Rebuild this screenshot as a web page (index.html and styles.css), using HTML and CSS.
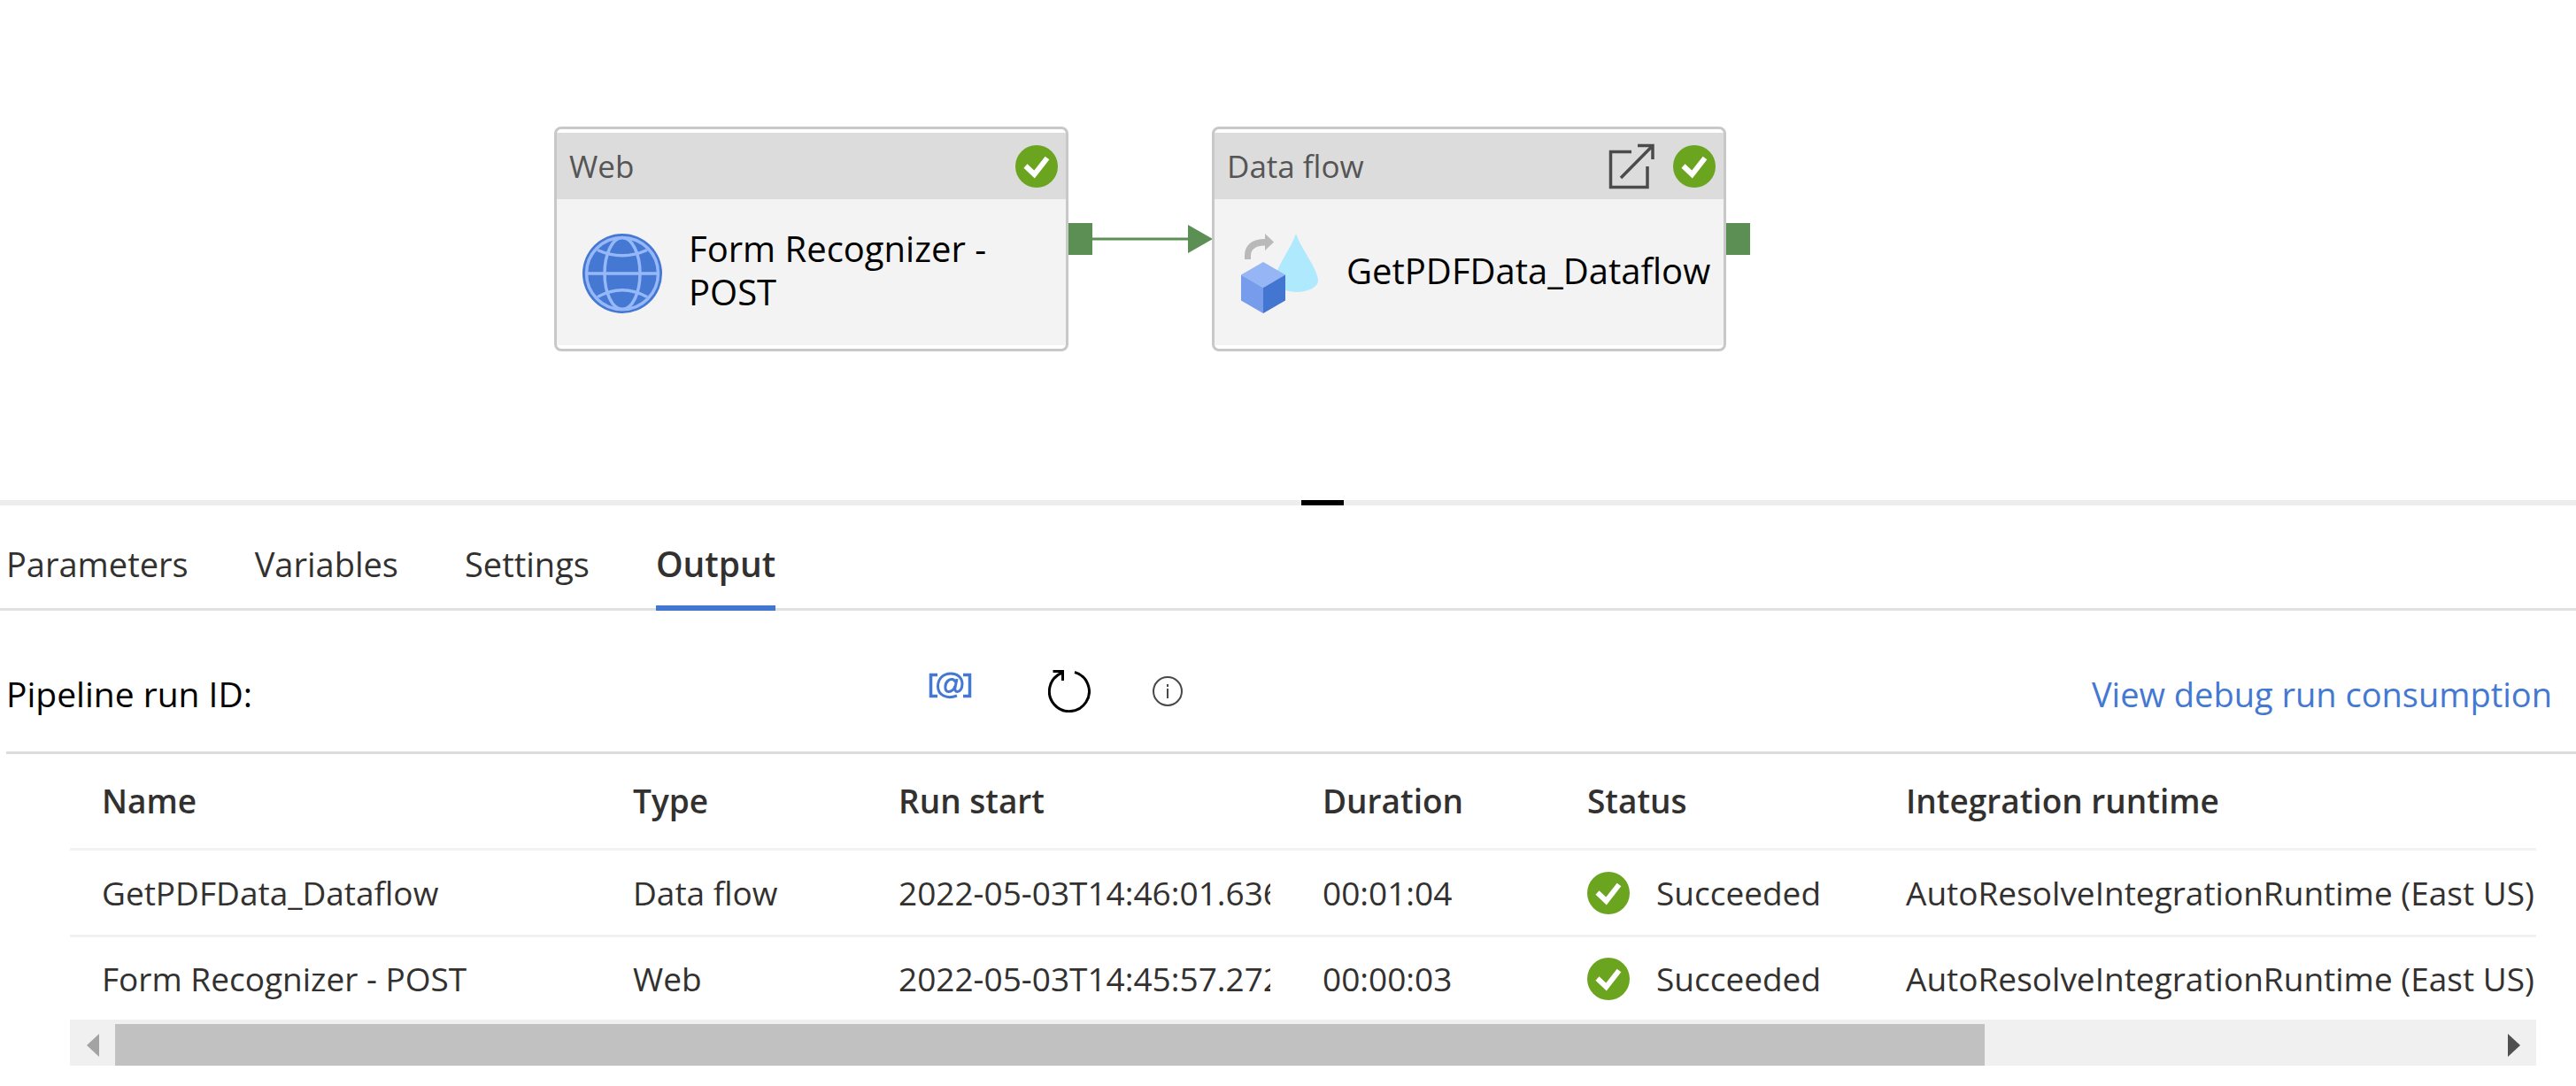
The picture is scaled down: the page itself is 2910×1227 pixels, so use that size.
FILE: index.html
```html
<!DOCTYPE html>
<html lang="en">
<head>
<meta charset="utf-8">
<title>Pipeline debug run</title>
<link rel="stylesheet" href="styles.css">
</head>
<body>
<svg class="symbols" aria-hidden="true">
  <symbol id="check" viewBox="0 0 48 48">
    <circle cx="24" cy="24" r="24" fill="#6ba41f"/>
    <path d="M11.500 23.500L21.500 33L36 14.500" fill="none" stroke="#fff" stroke-width="6"/>
  </symbol>
</svg>

<main class="canvas" aria-label="Pipeline canvas">
  <svg class="connector" viewBox="0 0 163 36" aria-hidden="true">
    <path d="M0 0h27v36H0z" fill="#5c8f53"/>
    <path d="M27 18h110" stroke="#5c8f53" stroke-width="3"/>
    <path d="M135 2l28 16l-28 16z" fill="#5c8f53"/>
  </svg>
  <article class="node node-web">
    <header class="node-head">
      <span class="node-type">Web</span>
      <svg class="check" role="img" aria-label="Succeeded"><use href="#check"/></svg>
    </header>
    <div class="node-body">
      <svg class="node-icon" viewBox="0 0 90 90" aria-hidden="true">
        <circle cx="45" cy="45" r="45" fill="#4478d2"/>
        <g fill="none" stroke="#97b8f8" stroke-width="3.500">
          <circle cx="45" cy="45" r="40.500"/>
          <ellipse cx="45" cy="45" rx="20" ry="40.500"/>
          <path d="M5 45h80M17 18.500Q45 31 73 18.500M17 71.500Q45 56 73 71.500"/>
        </g>
      </svg>
      <h2 class="node-name">Form Recognizer - POST</h2>
    </div>
  </article>
  <article class="node node-flow">
    <header class="node-head">
      <span class="node-type">Data flow</span>
      <button class="icon-button popout" type="button" aria-label="Open data flow">
        <svg width="52" height="52" viewBox="0 0 52 52" fill="none" stroke="#4b4b4b" stroke-width="3.500">
          <path d="M26 9.500H2.500V49.500H44V26M33 2.500H50V18M50 2.500L14 39"/>
        </svg>
      </button>
      <svg class="check" role="img" aria-label="Succeeded"><use href="#check"/></svg>
    </header>
    <div class="node-body">
      <svg class="node-icon" viewBox="0 0 90 90" aria-hidden="true">
        <path d="M63 0C68 16 88 40 88 53A25 13 0 0 1 63 66A25 13 0 0 1 39 53C39 40 58 16 63 0z" fill="#aee9fd"/>
        <path d="M5 29V25C5 13 13 6 28 6V0L38 9.500L28 19V13.500C17 13.500 12 18 12 25V29z" fill="#b9b9b9"/>
        <path d="M26 32L51 46.500L26 61L1 46.500z" fill="#95b5f5"/>
        <path d="M1 46.500L26 61V90L1 75.500z" fill="#779cec"/>
        <path d="M51 46.500L26 61V90L51 75.500z" fill="#4276d0"/>
      </svg>
      <h2 class="node-name">GetPDFData_Dataflow</h2>
    </div>
  </article>
  <span class="port"></span>
</main>

<div class="splitter" role="separator" aria-orientation="horizontal"><span class="grip"></span></div>

<section class="panel">
  <nav class="tabs">
    <button class="tab" type="button">Parameters</button>
    <button class="tab" type="button">Variables</button>
    <button class="tab" type="button">Settings</button>
    <button class="tab active" type="button" aria-current="page">Output</button>
  </nav>

  <div class="toolbar">
    <span class="run-id">Pipeline run ID:</span>
    <div class="tools">
      <button class="icon-button" type="button" aria-label="Dynamic content">
        <svg width="50" height="48" viewBox="0 0 50 48" fill="none" stroke="#4478d2" stroke-width="3">
          <path d="M10 5.500H2.500V29.500H10M39 5.500H46.500V29.500H39" stroke-width="3.500"/>
          <path d="M32 29C20 33.500 10.500 28 10.500 18.500C10.500 10 16.500 4 25 4C33 4 38 9 38 15.500C38 21 35.500 24.500 32.500 24.500C30 24.500 29.500 22.500 30 19.500L32 10"/>
          <path d="M30.500 14C29 10 25 9.500 22 12C18 15.500 17.500 24.500 22.500 24.500C26 24.500 29 21.500 30 18"/>
        </svg>
      </button>
      <button class="icon-button" type="button" aria-label="Refresh">
        <svg width="48" height="48" viewBox="0 0 48 48" fill="none" stroke="#000" stroke-width="3">
          <path d="M30 2.500A22.500 22.500 0 1 1 15 3.500M5.500 1.500H16.500V12"/>
        </svg>
      </button>
      <button class="icon-button info" type="button" aria-label="Information">
        <svg width="34" height="34" viewBox="0 0 34 34" fill="none" stroke="#484848" stroke-width="2">
          <circle cx="17" cy="17" r="16"/>
          <path d="M17 14v11M17 9v3"/>
        </svg>
      </button>
    </div>
    <a class="debug-link" href="#">View debug run consumption</a>
  </div>

  <div class="runs">
    <table class="grid">
      <colgroup>
        <col class="c-name"><col class="c-type"><col class="c-start"><col class="c-duration"><col class="c-status"><col>
      </colgroup>
      <thead>
        <tr><th>Name</th><th>Type</th><th>Run start</th><th>Duration</th><th>Status</th><th>Integration runtime</th></tr>
      </thead>
      <tbody>
        <tr>
          <td>GetPDFData_Dataflow</td><td>Data flow</td>
          <td><div class="clip">2022-05-03T14:46:01.636</div></td><td>00:01:04</td>
          <td><div class="status"><svg class="check" aria-hidden="true"><use href="#check"/></svg>Succeeded</div></td>
          <td>AutoResolveIntegrationRuntime (East US)</td>
        </tr>
        <tr>
          <td>Form Recognizer - POST</td><td>Web</td>
          <td><div class="clip">2022-05-03T14:45:57.272</div></td><td>00:00:03</td>
          <td><div class="status"><svg class="check" aria-hidden="true"><use href="#check"/></svg>Succeeded</div></td>
          <td>AutoResolveIntegrationRuntime (East US)</td>
        </tr>
      </tbody>
    </table>
    <div class="scrollbar">
      <button class="scroll-arrow" type="button" aria-label="Scroll left">
        <svg width="14" height="26" viewBox="0 0 14 26"><path d="M14 0V26L0 13z" fill="#a3a3a3"/></svg>
      </button>
      <div class="track"><div class="thumb"></div></div>
      <button class="scroll-arrow" type="button" aria-label="Scroll right">
        <svg width="14" height="26" viewBox="0 0 14 26"><path d="M0 0V26L14 13z" fill="#505050"/></svg>
      </button>
    </div>
  </div>
</section>
</body>
</html>
```
FILE: styles.css
```css
* { box-sizing: border-box; }

body {
  margin: 0;
  background: #fff;
  color: #323130;
  font-family: "Open Sans", "Noto Sans", sans-serif;
  font-size: 37px;
  line-height: 50px;
}

button {
  padding: 0;
  border: 0;
  background: none;
  color: inherit;
  font: inherit;
  cursor: pointer;
}

svg { display: block; }
.symbols { position: absolute; width: 0; height: 0; }
.check { flex: none; width: 48px; height: 48px; }

/* Pipeline canvas */
.canvas { position: relative; height: 565px; overflow: hidden; }

.node {
  position: absolute;
  top: 143px;
  width: 581px;
  padding: 4px 0;
  border: 3px solid #c8c8c8;
  border-radius: 8px;
  background: #fff;
}
.node-web { left: 626px; }
.node-flow { left: 1369px; }

.node-head {
  display: flex;
  align-items: center;
  height: 75px;
  padding: 0 9px 0 14px;
  background: #dcdcdc;
  color: #555;
  font-size: 35px;
}
.node-type { flex: 1; }
.popout { margin-right: 21px; }

.node-body {
  display: flex;
  align-items: center;
  gap: 30px;
  height: 165px;
  padding: 3px 9px 0 29px;
  background: #f3f3f3;
}
.node-icon { flex: none; width: 90px; height: 90px; }
.node-name {
  margin: 0;
  padding-bottom: 8px;
  color: #000;
  font-size: 40px;
  font-weight: 400;
  line-height: 49px;
}

.connector { position: absolute; top: 252px; left: 1207px; width: 163px; height: 36px; }
.port { position: absolute; top: 252px; left: 1950px; width: 27px; height: 36px; background: #5c8f53; }

.splitter { display: flex; justify-content: center; height: 6px; padding-left: 78px; background: #ededed; }
.grip { width: 48px; background: #000; }

/* Tabs */
.tabs {
  display: flex;
  gap: 75px;
  padding: 39px 7px 0;
  border-bottom: 3px solid #e0e0e0;
  font-size: 38px;
  line-height: 54px;
}
.tab { margin-bottom: -3px; padding-bottom: 20px; border-bottom: 6px solid transparent; }
.tab.active { border-color: #4376d1; font-size: 39px; font-weight: 600; }

/* Run toolbar */
.toolbar {
  display: flex;
  align-items: center;
  height: 162px;
  margin-left: 7px;
  padding: 29px 27px 0 0;
  border-bottom: 3px solid #dcdcdc;
}
.run-id { flex: 0 0 1042px; color: #000; font-size: 39px; }
.tools { display: flex; align-items: center; gap: 85px; padding-bottom: 7px; }
.info { margin-left: -15px; }
.debug-link { margin-left: auto; color: #4478d2; font-size: 38px; text-decoration: none; }

/* Runs grid */
.runs { margin: 0 45px 0 79px; }
.grid {
  width: 100%;
  table-layout: fixed;
  border-collapse: separate;
  border-spacing: 0;
  white-space: nowrap;
}
.c-name { width: 600px; }
.c-type { width: 300px; }
.c-duration { width: 299px; }
.c-start { width: 479px; }
.c-status { width: 360px; }
.grid th, .grid td { height: 93px; padding: 0 0 0 36px; text-align: left; }
.grid th { height: 109px; border-bottom: 3px solid #f3f2f0; font-weight: 600; }
.grid tbody tr:first-child td { height: 98px; border-bottom: 3px solid #f1f1f1; }
.clip { overflow: hidden; margin-right: 23px; }
.status { display: flex; align-items: center; gap: 30px; }

.scrollbar { display: flex; height: 52px; padding-top: 5px; background: #f0f0f0; }
.scroll-arrow { display: flex; flex: 0 0 51px; align-items: center; justify-content: center; }
.track { flex: 1; }
.thumb { width: 78.7%; height: 47px; background: #c1c1c1; }
```
